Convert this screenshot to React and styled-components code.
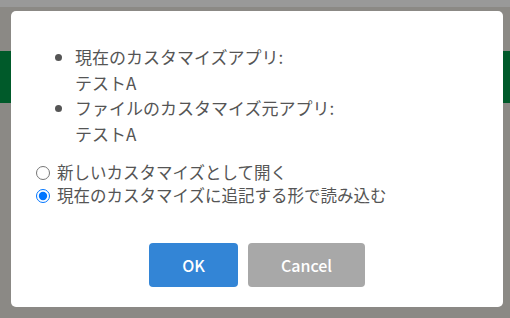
import React from "react";
import styled, { createGlobalStyle } from "styled-components";

const Global = createGlobalStyle`
  html, body { margin: 0; padding: 0; }
  body {
    width: 510px;
    height: 318px;
    overflow: hidden;
    background: #8b8985;
    font-family: "Noto Sans CJK JP", "Noto Sans", sans-serif;
  }
`;

const Page = styled.div`
  width: 510px;
  height: 318px;
  display: flex;
  flex-direction: column;
  background: #8b8985;
`;

const TopStrip = styled.div`
  height: 7px;
  background: #999999;
`;

const GreenBand = styled.div`
  margin-top: 44px;
  height: 52px;
  background: #005a2a;
`;

const Dialog = styled.div`
  position: fixed;
  top: 11px;
  left: 11px;
  width: 492px;
  height: 296px;
  box-sizing: border-box;
  background: #ffffff;
  border-radius: 5px;
  padding: 33px 20px 20px;
  display: flex;
  flex-direction: column;
  color: #555555;
`;

const InfoList = styled.ul`
  margin: 0 0 15px;
  padding-left: 44px;
  font-size: 17px;
  line-height: 25.6px;
  list-style: disc;
`;

const InfoItem = styled.li`
  padding-left: 0;
`;

const RadioGroup = styled.div`
  display: flex;
  flex-direction: column;
  font-size: 16.5px;
  line-height: 23px;
`;

const RadioLabel = styled.label`
  display: flex;
  align-items: center;
  white-space: nowrap;
`;

const Radio = styled.input`
  margin: 0 7px 0 5px;
  width: 14px;
  height: 14px;
`;

const ButtonRow = styled.div`
  margin-top: auto;
  display: flex;
  justify-content: center;
  gap: 10px;
`;

const Button = styled.button`
  width: ${(p) => p.$w}px;
  height: 44px;
  border: none;
  border-radius: 4px;
  background: ${(p) => (p.$primary ? "#3385d6" : "#a8a8a8")};
  color: #ffffff;
  font-family: "Noto Sans CJK JP", "Noto Sans", sans-serif;
  font-size: 16px;
  font-weight: 500;
  cursor: pointer;
`;

export default function App() {
  return (
    <>
      <Global />
      <Page>
        <TopStrip />
        <GreenBand />
      </Page>
      <Dialog>
        <InfoList>
          <InfoItem>
            現在のカスタマイズアプリ:
            <br />
            テストA
          </InfoItem>
          <InfoItem>
            ファイルのカスタマイズ元アプリ:
            <br />
            テストA
          </InfoItem>
        </InfoList>
        <RadioGroup>
          <RadioLabel>
            <Radio type="radio" name="mode" />
            新しいカスタマイズとして開く
          </RadioLabel>
          <RadioLabel>
            <Radio type="radio" name="mode" defaultChecked />
            現在のカスタマイズに追記する形で読み込む
          </RadioLabel>
        </RadioGroup>
        <ButtonRow>
          <Button $primary $w={89}>OK</Button>
          <Button $w={117}>Cancel</Button>
        </ButtonRow>
      </Dialog>
    </>
  );
}
